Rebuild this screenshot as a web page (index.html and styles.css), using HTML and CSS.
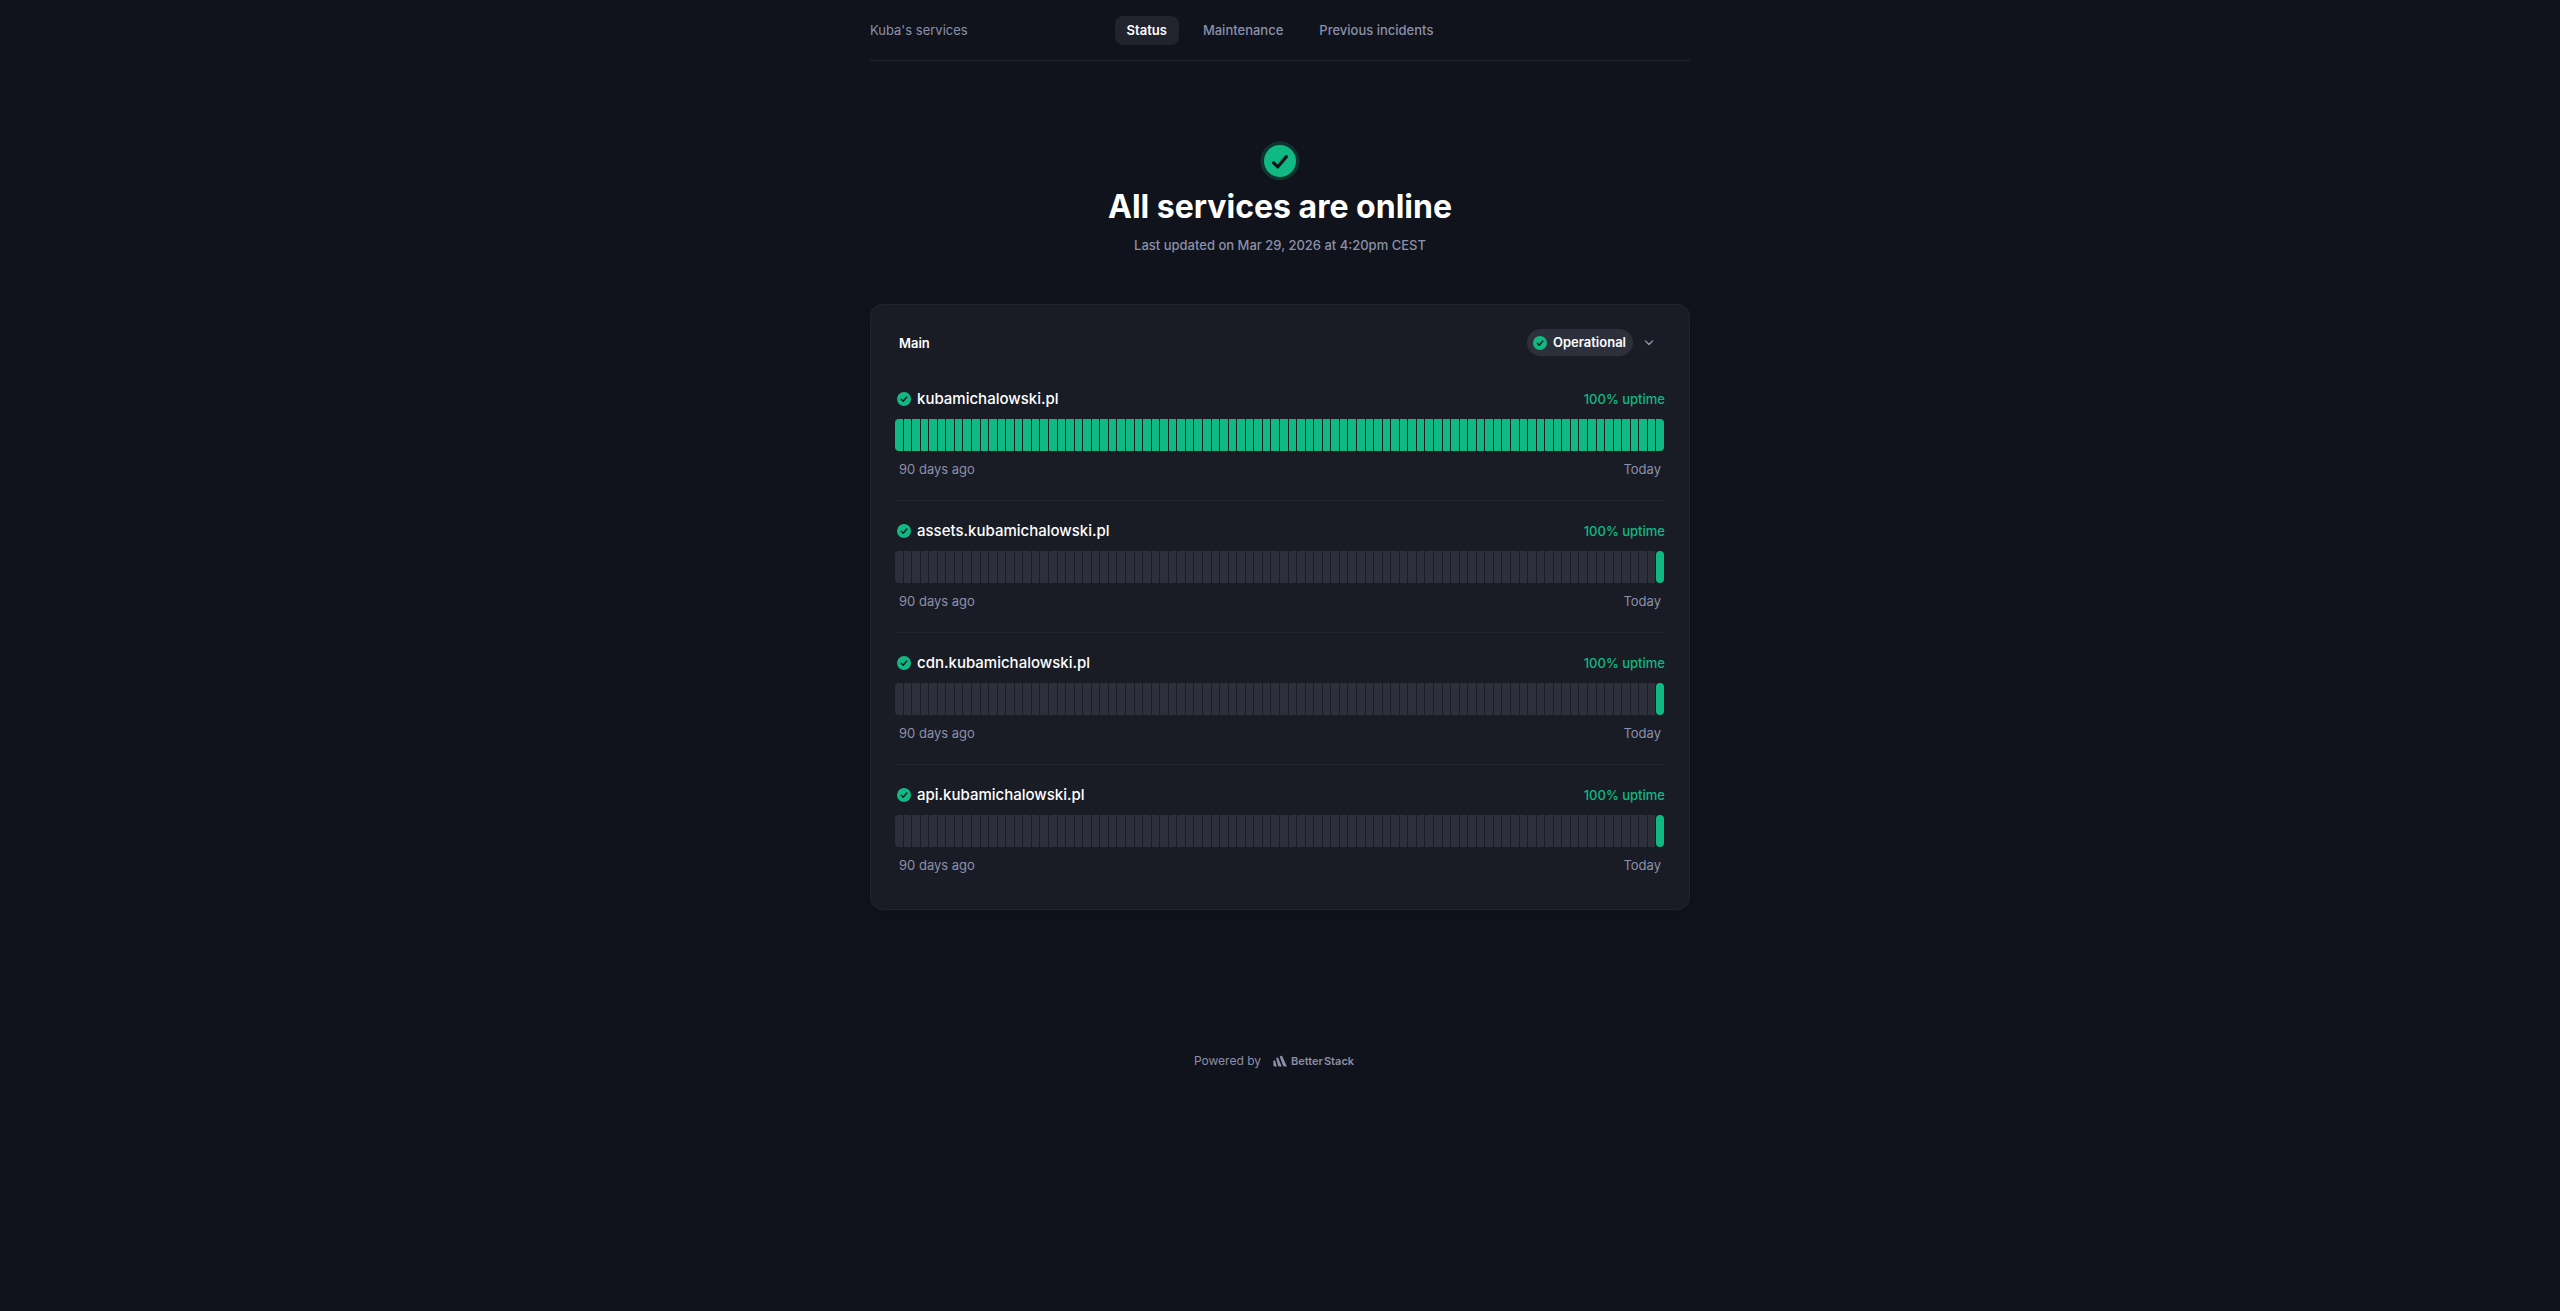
FILE: index.html
```html
<!DOCTYPE html>
<html lang="en">
<head>
    <meta charset="UTF-8">
    <meta name="viewport" content="width=device-width, initial-scale=1.0">
    <title>Kuba's services status</title>
    <link rel="stylesheet" href="styles.css">
</head>
<body>
    <svg class="sprite" aria-hidden="true">
        <symbol id="check" viewBox="0 0 14 14">
            <circle cx="7" cy="7" r="7" fill="#10b981"/>
            <path d="M4.3 7.3 6.2 9.2 9.8 5" fill="none" stroke="#1a1d26" stroke-width="1.5" stroke-linecap="round" stroke-linejoin="round"/>
        </symbol>
    </svg>
    <div class="container">
        <header class="header">
            <a class="company" href="#">Kuba's services</a>
            <nav class="nav">
                <a class="nav-link active" href="#">Status</a>
                <a class="nav-link" href="#">Maintenance</a>
                <a class="nav-link" href="#">Previous incidents</a>
            </nav>
        </header>

        <main>
            <div class="hero">
                <svg class="hero-icon" viewBox="0 0 40 40" aria-hidden="true">
                    <circle cx="20" cy="20" r="19.5" fill="#10b981" fill-opacity="0.2"/>
                    <circle cx="20" cy="20" r="16" fill="#10b981"/>
                    <path d="M13.6 21.8 17.8 25.8 26.4 15.6" fill="none" stroke="#10121a" stroke-width="3.2" stroke-linecap="round" stroke-linejoin="round"/>
                </svg>
                <h1>All services are online</h1>
                <p>Last updated on Mar 29, 2026 at 4:20pm CEST</p>
            </div>

            <section class="card">
                <div class="card-header">
                    <h2>Main</h2>
                    <button type="button" class="toggle">
                        <span class="badge">
                            <svg class="check"><use href="#check"/></svg>
                            Operational
                        </span>
                        <svg class="chevron" viewBox="0 0 10 6" aria-hidden="true"><path d="M1.5 1 5 4.6 8.5 1" fill="none" stroke="currentColor" stroke-width="1.4" stroke-linecap="round" stroke-linejoin="round"/></svg>
                    </button>
                </div>
                <div id="services">
                    <!-- Services are rendered here -->
                </div>
            </section>
        </main>

        <footer class="footer">
            <span>Powered by</span>
            <a class="brand" href="#">
                <svg class="brand-icon" viewBox="0 0 14 12" aria-hidden="true">
                    <path d="M.4 6.2Q.9 4.9 2 5.3L3.9 11.4H1.6Q.5 11.4.4 10Z"/>
                    <path d="M3.1 3Q4.4 1.6 5.4 3.4L8.7 11.4H6.4Q5.4 11.4 5 10.4Z"/>
                    <path d="M6.7 1.4Q8.4-.2 9.6 1.9L13.9 11.4H11.4Q10.4 11.4 9.9 10.3Z"/>
                </svg>
                <span class="brand-name"><span>Better</span><span>Stack</span></span>
            </a>
        </footer>
    </div>

    <script>
        const DAYS = 90;

        const services = [
            { name: 'kubamichalowski.pl', monitored: 90 },
            { name: 'assets.kubamichalowski.pl', monitored: 1 },
            { name: 'cdn.kubamichalowski.pl', monitored: 1 },
            { name: 'api.kubamichalowski.pl', monitored: 1 }
        ];

        function renderDays(monitored) {
            let days = '';
            for (let i = 0; i < DAYS; i++) {
                days += `<span class="day ${i >= DAYS - monitored ? 'up' : ''}"></span>`;
            }
            return days;
        }

        document.getElementById('services').innerHTML = services.map(service => `
            <div class="service">
                <div class="service-header">
                    <svg class="check"><use href="#check"/></svg>
                    <h3>${service.name}</h3>
                    <span class="uptime">100% uptime</span>
                </div>
                <div class="days">${renderDays(service.monitored)}</div>
                <div class="range">
                    <span>90 days ago</span>
                    <span>Today</span>
                </div>
            </div>
        `).join('');
    </script>
</body>
</html>
```
FILE: styles.css
```css
* {
    box-sizing: border-box;
}
body {
    margin: 0;
    background-color: #10131b;
    color: #8b8fa9;
    font-family: Inter, sans-serif;
    font-size: 13px;
    line-height: 20px;
}
h1, h2, h3, p {
    margin: 0;
}
a {
    color: inherit;
    text-decoration: none;
}
.sprite {
    position: absolute;
    width: 0;
    height: 0;
}
.container {
    max-width: 860px;
    margin: 0 auto;
    padding: 0 20px;
}
.header {
    display: grid;
    grid-template-columns: 1fr auto 1fr;
    align-items: center;
    padding: 16px 0 15px;
    border-bottom: 1px solid #22242d;
    line-height: 29px;
}
.nav {
    display: flex;
    gap: 12px;
}
.nav-link {
    padding: 0 12px;
    border-radius: 8px;
    font-weight: 500;
}
.nav-link.active {
    background-color: #22242d;
    color: #fff;
    font-weight: 600;
}
.hero {
    display: flex;
    flex-direction: column;
    align-items: center;
    padding: 80px 0 49px;
    text-align: center;
}
.hero-icon {
    width: 40px;
    height: 40px;
}
h1 {
    margin: 6px 0 8px;
    color: #fff;
    font-size: 32px;
    font-weight: 700;
    line-height: 40px;
}
.hero p {
    font-weight: 500;
}
.card {
    padding: 24px 24px 34px;
    border: 1px solid #22242d;
    border-radius: 12px;
    background-color: #1a1c25;
    box-shadow: 0 4px 24px rgba(0, 0, 0, 0.15);
}
.card-header {
    display: flex;
    align-items: center;
    justify-content: space-between;
    padding: 0 11px 0 4px;
    margin-bottom: 31px;
}
h2 {
    color: #fff;
    font-size: 13px;
    font-weight: 600;
}
.toggle {
    display: flex;
    align-items: center;
    gap: 11px;
    padding: 0;
    border: 0;
    background: none;
    color: inherit;
    font: inherit;
}
.badge {
    display: flex;
    align-items: center;
    gap: 6px;
    padding: 0 7px 0 6px;
    border-radius: 14px;
    background-color: #2d303b;
    color: #fff;
    font-weight: 600;
    line-height: 27px;
}
.check {
    flex: none;
    width: 14px;
    height: 14px;
}
.chevron {
    width: 10px;
    height: 6px;
}
.service + .service {
    margin-top: 21px;
    padding-top: 18px;
    border-top: 1px solid #22242d;
}
.service-header {
    display: flex;
    align-items: center;
    gap: 6px;
    padding-left: 2px;
    margin-bottom: 8px;
}
h3 {
    color: #fff;
    font-size: 15px;
    font-weight: 500;
    line-height: 24px;
}
.uptime {
    margin-left: auto;
    color: #10b981;
    font-weight: 500;
}
.days {
    display: grid;
    grid-template-columns: repeat(90, 1fr);
    gap: 1px;
    height: 32px;
    margin: 0 1px 8px 0;
}
.day {
    background-color: #2d303b;
}
.day.up {
    background-color: #10b981;
}
.day:first-child {
    border-radius: 4px 0 0 4px;
}
.day:last-child {
    border-radius: 0 4px 4px 0;
}
/* a lone day gets rounded on both sides */
.day:not(.up) + .day.up {
    border-radius: 4px;
}
.range {
    display: flex;
    justify-content: space-between;
    padding: 0 4px;
}
.footer {
    display: flex;
    align-items: center;
    justify-content: center;
    gap: 12px;
    padding: 141px 12px 40px 0;
    font-size: 12px;
}
.brand {
    display: flex;
    align-items: center;
    gap: 4px;
    font-size: 11px;
    font-weight: 600;
}
.brand-name {
    display: flex;
    gap: 1px;
}
.brand-icon {
    width: 14px;
    height: 12px;
    fill: currentColor;
}
```
